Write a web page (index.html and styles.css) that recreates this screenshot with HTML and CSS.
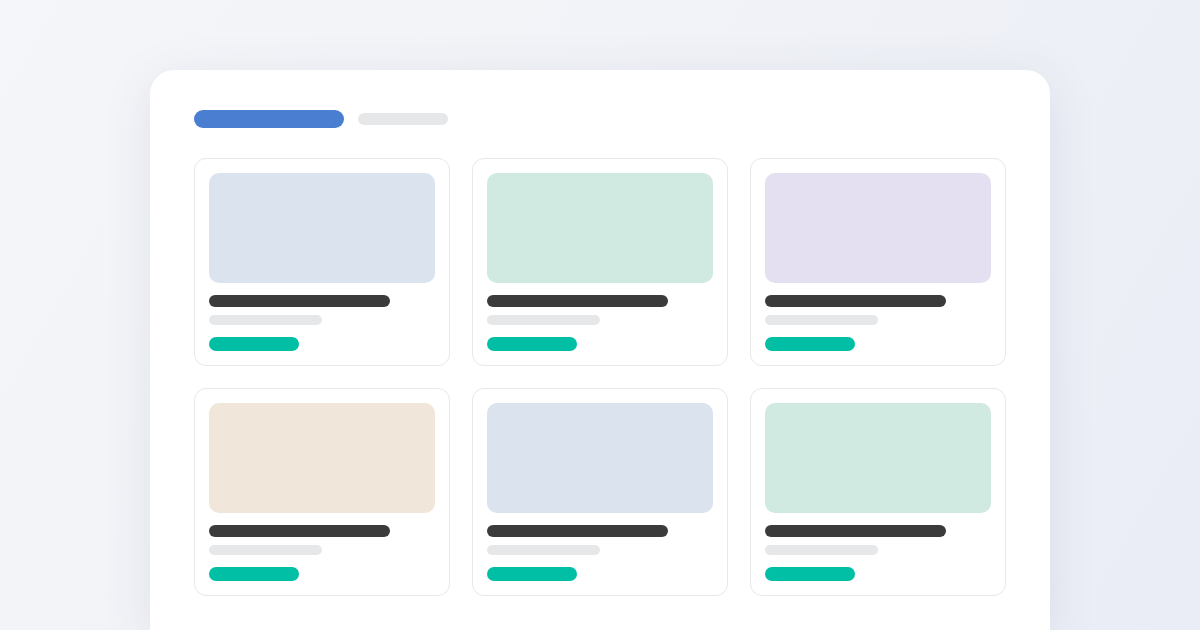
FILE: index.html
```html
<!DOCTYPE html>
<html lang="en">
<head>
  <meta charset="UTF-8">
  <title>Card grid</title>
  <link rel="stylesheet" href="styles.css">
</head>
<body>
  <div class="panel">
    <div class="tabs">
      <div class="tab tab-active"></div>
      <div class="tab tab-idle"></div>
    </div>

    <div class="grid">
      <div class="card">
        <div class="thumb thumb-blue"></div>
        <div class="line-title"></div>
        <div class="line-sub"></div>
        <div class="pill"></div>
      </div>
      <div class="card">
        <div class="thumb thumb-green"></div>
        <div class="line-title"></div>
        <div class="line-sub"></div>
        <div class="pill"></div>
      </div>
      <div class="card">
        <div class="thumb thumb-purple"></div>
        <div class="line-title"></div>
        <div class="line-sub"></div>
        <div class="pill"></div>
      </div>
      <div class="card">
        <div class="thumb thumb-sand"></div>
        <div class="line-title"></div>
        <div class="line-sub"></div>
        <div class="pill"></div>
      </div>
      <div class="card">
        <div class="thumb thumb-blue"></div>
        <div class="line-title"></div>
        <div class="line-sub"></div>
        <div class="pill"></div>
      </div>
      <div class="card">
        <div class="thumb thumb-green"></div>
        <div class="line-title"></div>
        <div class="line-sub"></div>
        <div class="pill"></div>
      </div>
    </div>
  </div>
</body>
</html>
```

FILE: styles.css
```css
* {
  margin: 0;
  padding: 0;
  box-sizing: border-box;
}

html {
  height: 630px;
  overflow: hidden;
  background: linear-gradient(120deg, #f5f6f9 0%, #f0f2f7 50%, #eaedf6 100%);
}

body {
  height: 630px;
  padding-top: 70px;
  font-family: 'Liberation Sans', sans-serif;
}

.panel {
  width: 900px;
  height: 560px;
  margin: 0 auto;
  padding: 40px 44px;
  background: #fff;
  border-radius: 24px 24px 0 0;
  box-shadow: 0 10px 50px rgba(60, 70, 110, 0.10);
}

/* header tabs */

.tabs {
  display: flex;
  align-items: center;
  gap: 14px;
  height: 18px;
  margin-bottom: 30px;
}

.tab {
  border-radius: 9px;
}

.tab-active {
  width: 150px;
  height: 18px;
  background: #4a7ed0;
}

.tab-idle {
  width: 90px;
  height: 12px;
  background: #e6e7e9;
}

/* cards */

.grid {
  display: grid;
  grid-template-columns: repeat(3, 256px);
  gap: 22px;
}

.card {
  height: 208px;
  padding: 14px;
  border: 1px solid #e7e8ea;
  border-radius: 12px;
  display: flex;
  flex-direction: column;
}

.thumb {
  height: 110px;
  border-radius: 10px;
}

.thumb-blue { background: #dbe4ee; }
.thumb-green { background: #d0e9e1; }
.thumb-purple { background: #e4e0f1; }
.thumb-sand { background: #f1e6da; }

.line-title {
  width: 181px;
  height: 12px;
  margin-top: 12px;
  border-radius: 6px;
  background: #3b3b3b;
}

.line-sub {
  width: 113px;
  height: 10px;
  margin-top: 8px;
  border-radius: 5px;
  background: #e6e7e9;
}

.pill {
  width: 90px;
  height: 14px;
  margin-top: 12px;
  border-radius: 7px;
  background: #00bfa5;
}
```
